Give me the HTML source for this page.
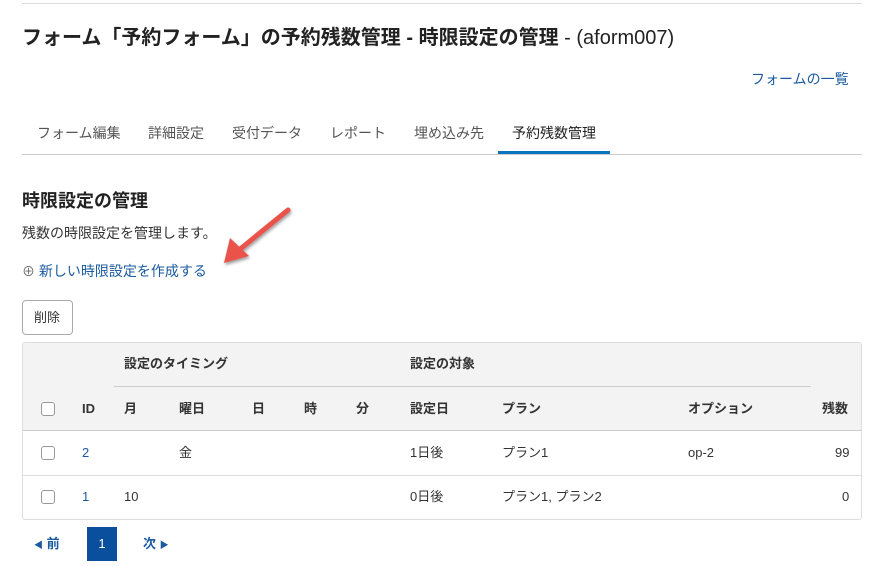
<!DOCTYPE html>
<html><head><meta charset="utf-8"><style>
*{margin:0;padding:0;box-sizing:border-box}
body{width:873px;height:566px;background:#fff;font-family:"Liberation Sans","Noto Sans CJK JP",sans-serif;color:#333;position:relative;overflow:hidden;font-size:14px}
.a{position:absolute;white-space:nowrap;line-height:20px}
.l{color:#1a5a9e}
.th{font-weight:bold;font-size:13px;color:#333}
.cb{position:absolute;width:14px;height:14px;border:1px solid #999;border-radius:3px;background:#fff}
</style></head><body>
<div class="a" style="left:22px;top:3px;width:840px;height:1px;background:#ddd"></div>
<div class="a" style="left:22px;top:28px;font-size:20px;font-weight:bold;color:#222">フォーム「予約フォーム」の予約残数管理 - 時限設定の管理 <span style="font-weight:normal">- (aform007)</span></div>
<div class="a l" style="left:751px;top:69px;font-size:14px">フォームの一覧</div>
<div class="a" style="left:37px;top:123px;color:#555">フォーム編集</div>
<div class="a" style="left:148px;top:123px;color:#555">詳細設定</div>
<div class="a" style="left:232px;top:123px;color:#555">受付データ</div>
<div class="a" style="left:330px;top:123px;color:#555">レポート</div>
<div class="a" style="left:414px;top:123px;color:#555">埋め込み先</div>
<div class="a" style="left:512px;top:123px;color:#222">予約残数管理</div>
<div class="a" style="left:22px;top:154px;width:840px;height:1px;background:#ccc"></div>
<div class="a" style="left:498px;top:151px;width:112px;height:3px;background:#0a73c0"></div>
<div class="a" style="left:22px;top:191px;font-size:18px;font-weight:bold;color:#222">時限設定の管理</div>
<div class="a" style="left:22px;top:223px;font-size:14px">残数の時限設定を管理します。</div>
<div class="a l" style="left:22px;top:261px;font-size:14px"><span style="color:#666;font-size:13px">⊕</span> 新しい時限設定を作成する</div>
<svg class="a" style="left:215px;top:200px" width="85" height="70"><defs><filter id="s"><feDropShadow dx="1" dy="2" stdDeviation="1.5" flood-opacity=".4"/></filter></defs><g filter="url(#s)"><line x1="73" y1="10" x2="24" y2="50" stroke="#e9524a" stroke-width="5" stroke-linecap="round"/><polygon points="9,63 15,38 34,56" fill="#e9524a"/></g></svg>
<div class="a" style="left:22px;top:300px;width:51px;height:35px;border:1px solid #aaa;border-radius:4px;font-size:13px;padding:7px 0 0 11px">削除</div>
<div class="a" style="left:22px;top:342px;width:840px;height:178px;border:1px solid #ddd;border-radius:3px;overflow:hidden">
<div class="a" style="left:0;top:0;width:840px;height:88px;background:#f3f3f3;border-bottom:1px solid #ccc"></div>
<div class="a" style="left:91px;top:43px;width:697px;height:1px;background:#ccc"></div>
<div class="a" style="left:0;top:132px;width:840px;height:1px;background:#ddd"></div>
</div>
<div class="a th" style="left:124px;top:354px">設定のタイミング</div>
<div class="a th" style="left:410px;top:354px">設定の対象</div>
<div class="cb" style="left:41px;top:402px"></div>
<div class="a th" style="left:82px;top:399px">ID</div>
<div class="a th" style="left:124px;top:399px">月</div>
<div class="a th" style="left:179px;top:399px">曜日</div>
<div class="a th" style="left:252px;top:399px">日</div>
<div class="a th" style="left:304px;top:399px">時</div>
<div class="a th" style="left:356px;top:399px">分</div>
<div class="a th" style="left:410px;top:399px">設定日</div>
<div class="a th" style="left:502px;top:399px">プラン</div>
<div class="a th" style="left:688px;top:399px">オプション</div>
<div class="a th" style="left:822px;top:399px">残数</div>
<div class="cb" style="left:41px;top:446px"></div>
<div class="a l" style="left:82px;top:443px;font-size:13px">2</div>
<div class="a" style="left:179px;top:443px;font-size:13px">金</div>
<div class="a" style="left:410px;top:443px;font-size:13px">1日後</div>
<div class="a" style="left:502px;top:443px;font-size:13px">プラン1</div>
<div class="a" style="left:688px;top:443px;font-size:13px">op-2</div>
<div class="a" style="left:835px;top:443px;font-size:13px">99</div>
<div class="cb" style="left:41px;top:490px"></div>
<div class="a l" style="left:82px;top:487px;font-size:13px">1</div>
<div class="a" style="left:124px;top:487px;font-size:13px">10</div>
<div class="a" style="left:410px;top:487px;font-size:13px">0日後</div>
<div class="a" style="left:502px;top:487px;font-size:13px">プラン1, プラン2</div>
<div class="a" style="left:842px;top:487px;font-size:13px">0</div>
<div class="a l" style="left:34px;top:534px;font-size:13px;font-weight:bold"><span style="font-size:9px">◀</span> 前</div>
<div class="a" style="left:87px;top:527px;width:30px;height:34px;background:#0a4f9e;color:#fff;font-size:13px;text-align:center;line-height:34px">1</div>
<div class="a l" style="left:143px;top:534px;font-size:13px;font-weight:bold">次 <span style="font-size:9px">▶</span></div>
</body></html>
